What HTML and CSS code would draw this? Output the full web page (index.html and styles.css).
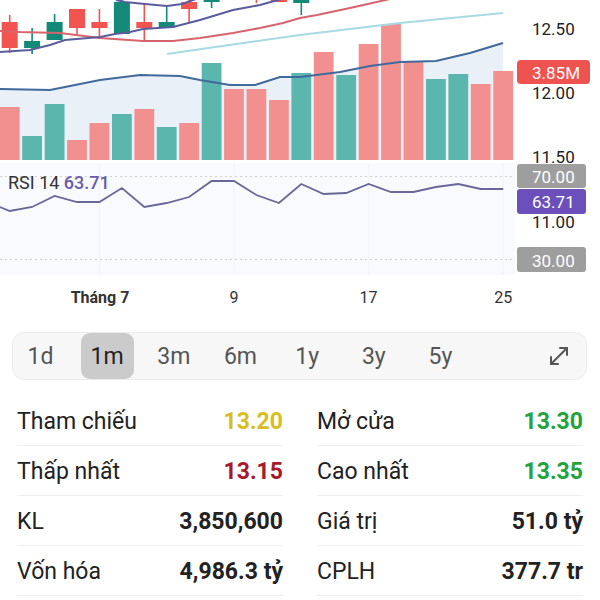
FILE: index.html
```html
<!DOCTYPE html>
<html lang="vi">
<head>
    <meta charset="UTF-8">
    <title>Biểu đồ</title>
    <link rel="stylesheet" href="styles.css">
</head>
<body>
    <!--biểu đồ nến + khối lượng + RSI-->
    <div class="chart-box">
        <svg class="chart" width="600" height="310" viewBox="0 0 600 310">
            <!--vùng RSI-->
            <rect x="0" y="163" width="515" height="112" fill="#f8fafd"/>
            <g stroke="#f1f3f7" stroke-width="1">
                <line x1="99.4" y1="163" x2="99.4" y2="275"/>
                <line x1="234" y1="163" x2="234" y2="275"/>
                <line x1="368.6" y1="163" x2="368.6" y2="275"/>
                <line x1="503.2" y1="163" x2="503.2" y2="275"/>
            </g>
            <g stroke="#cfcfcf" stroke-width="1" stroke-dasharray="2 3">
                <line x1="0" y1="176.5" x2="515" y2="176.5"/>
                <line x1="0" y1="259.5" x2="515" y2="259.5"/>
            </g>

            <!--đường MA khối lượng (vùng tô)-->
            <path d="M0,89 L50,90 60,88 100,80 140,75 180,76 200,80 230,85 255,85 280,77 300,77 340,72 370,66 400,62 436,61 470,53 503,43 L503,160 L0,160 Z" fill="#e9f0f8"/>

            <!--cột khối lượng-->
            <g class="vol-up" fill="#5bb7ae">
                <rect x="22.2" y="136" width="19.8" height="24"/>
                <rect x="44.7" y="104" width="19.8" height="56"/>
                <rect x="112" y="114" width="19.8" height="46"/>
                <rect x="156.8" y="127" width="19.8" height="33"/>
                <rect x="201.7" y="63" width="19.8" height="97"/>
                <rect x="291.4" y="73" width="19.8" height="87"/>
                <rect x="336.3" y="75" width="19.8" height="85"/>
                <rect x="426" y="79" width="19.8" height="81"/>
                <rect x="448.4" y="74" width="19.8" height="86"/>
            </g>
            <g class="vol-down" fill="#f29090">
                <rect x="-0.2" y="107" width="19.8" height="53"/>
                <rect x="67.1" y="140" width="19.8" height="20"/>
                <rect x="89.5" y="123" width="19.8" height="37"/>
                <rect x="134.4" y="109" width="19.8" height="51"/>
                <rect x="179.2" y="123" width="19.8" height="37"/>
                <rect x="224.1" y="89" width="19.8" height="71"/>
                <rect x="246.5" y="89" width="19.8" height="71"/>
                <rect x="269" y="100" width="19.8" height="60"/>
                <rect x="313.8" y="52" width="19.8" height="108"/>
                <rect x="358.7" y="44" width="19.8" height="116"/>
                <rect x="381.1" y="24" width="19.8" height="136"/>
                <rect x="403.5" y="61" width="19.8" height="99"/>
                <rect x="470.8" y="84" width="19.8" height="76"/>
                <rect x="493.3" y="71" width="19.8" height="89"/>
            </g>
            <polyline points="0,89 50,90 60,88 100,80 140,75 180,76 200,80 230,85 255,85 280,77 300,77 340,72 370,66 400,62 436,61 470,53 503,43" fill="none" stroke="#40699c" stroke-width="2"/>

            <!--nến-->
            <g stroke="#138a77" stroke-width="1.6">
                <line x1="32.1" y1="28" x2="32.1" y2="54"/>
                <line x1="54.6" y1="14" x2="54.6" y2="40"/>
                <line x1="121.9" y1="-5" x2="121.9" y2="34"/>
                <line x1="166.7" y1="7" x2="166.7" y2="28"/>
                <line x1="211.6" y1="-5" x2="211.6" y2="8"/>
                <line x1="301.3" y1="-5" x2="301.3" y2="15"/>
            </g>
            <g fill="#138a77">
                <rect x="24.1" y="41" width="16" height="7"/>
                <rect x="46.6" y="22" width="16" height="18"/>
                <rect x="113.9" y="2" width="16" height="32"/>
                <rect x="158.7" y="22" width="16" height="6"/>
                <rect x="203.6" y="-10" width="16" height="12"/>
                <rect x="293.3" y="-10" width="16" height="13"/>
            </g>
            <g stroke="#f2544f" stroke-width="1.6">
                <line x1="9.7" y1="15" x2="9.7" y2="53"/>
                <line x1="77" y1="9" x2="77" y2="34"/>
                <line x1="99.4" y1="9" x2="99.4" y2="39"/>
                <line x1="144.3" y1="3" x2="144.3" y2="41"/>
                <line x1="189.1" y1="-5" x2="189.1" y2="22"/>
                <line x1="256.4" y1="-5" x2="256.4" y2="3"/>
            </g>
            <g fill="#f2544f">
                <rect x="1.7" y="22" width="16" height="26"/>
                <rect x="69" y="9" width="16" height="19"/>
                <rect x="91.4" y="22" width="16" height="6"/>
                <rect x="136.3" y="22" width="16" height="6"/>
                <rect x="181.1" y="2" width="16" height="7"/>
                <rect x="270.9" y="-10" width="16" height="12"/>
            </g>

            <!--đường trung bình giá-->
            <g fill="none" stroke-width="2">
                <polyline points="0,31 20,32 60,33 100,38 143,41 173,41 200,38 233,33 260,28 283,23 300,18 317,15 350,8 390,-1" stroke="#d8636c"/>
                <polyline points="0,52 30,50 50,45 65,40 100,37 115,34 130,32 143,29 173,27 200,20 233,10 260,5 285,-2" stroke="#5a5c9c"/>
                <polyline points="116,0 125,2 145,4 167,6 182,4 196,-1" stroke="#5a5c9c"/>
                <polyline points="167,54 250,42 300,35 400,23 503,13" stroke="#a8dae3"/>
            </g>

            <!--đường RSI-->
            <polyline points="0,207 9.7,211 32.1,207 54.6,196 77,202 99.4,202 121.9,188 144.3,207 166.7,203 189.1,197 211.6,181 234,181 256.4,195 278.9,203 301.3,184 323.7,194 346.2,193 368.6,184 391,192 413.4,192 435.9,187 458.3,184 480.7,189 503.2,189" fill="none" stroke="#6a6699" stroke-width="1.8"/>
            <text class="rsi-label" x="8" y="189">RSI 14 <tspan class="rsi-value">63.71</tspan></text>

            <!--trục giá-->
            <g class="axis-label">
                <text x="532" y="35">12.50</text>
                <text x="532" y="99">12.00</text>
                <text x="532" y="163">11.50</text>
                <text x="532" y="228">11.00</text>
            </g>
            <rect x="517" y="60" width="73" height="24" rx="4" fill="#ef5350"/>
            <text class="badge-text" x="532" y="79">3.85M</text>
            <rect x="517" y="164" width="69" height="24" rx="3" fill="#9e9e9e"/>
            <text class="badge-text" x="532" y="183">70.00</text>
            <rect x="517" y="189" width="69" height="25" rx="3" fill="#6b4fbb"/>
            <text class="badge-text" x="532" y="208">63.71</text>
            <rect x="517" y="247" width="69" height="25" rx="3" fill="#9e9e9e"/>
            <text class="badge-text" x="532" y="267">30.00</text>

            <!--trục thời gian-->
            <g class="date-label">
                <text class="month" x="100" y="303">Tháng 7</text>
                <text x="234" y="303">9</text>
                <text x="368.6" y="303">17</text>
                <text x="503.2" y="303">25</text>
            </g>
        </svg>
    </div>

    <!--khung thời gian-->
    <div class="range-bar">
        <span class="range-item">1d</span>
        <span class="range-item active">1m</span>
        <span class="range-item">3m</span>
        <span class="range-item">6m</span>
        <span class="range-item">1y</span>
        <span class="range-item">3y</span>
        <span class="range-item">5y</span>
        <span class="expand-btn">
            <svg width="22" height="22" viewBox="0 0 22 22" fill="none" stroke="#555" stroke-width="2" stroke-linecap="round" stroke-linejoin="round">
                <path d="M3 19 L19 3"/>
                <path d="M12 3 H19 V10"/>
                <path d="M3 12 V19 H10"/>
            </svg>
        </span>
    </div>

    <!--thông tin giá-->
    <div class="stats">
        <div class="stat-row"><span class="stat-name">Tham chiếu</span><span class="stat-val ref">13.20</span></div>
        <div class="stat-row"><span class="stat-name">Mở cửa</span><span class="stat-val up">13.30</span></div>
        <div class="stat-row"><span class="stat-name">Thấp nhất</span><span class="stat-val down">13.15</span></div>
        <div class="stat-row"><span class="stat-name">Cao nhất</span><span class="stat-val up">13.35</span></div>
        <div class="stat-row"><span class="stat-name">KL</span><span class="stat-val">3,850,600</span></div>
        <div class="stat-row"><span class="stat-name">Giá trị</span><span class="stat-val">51.0 tỷ</span></div>
        <div class="stat-row"><span class="stat-name">Vốn hóa</span><span class="stat-val">4,986.3 tỷ</span></div>
        <div class="stat-row"><span class="stat-name">CPLH</span><span class="stat-val">377.7 tr</span></div>
    </div>
</body>
</html>
```
FILE: styles.css
```css
* {
    margin: 0;
    padding: 0;
    box-sizing: border-box;
}
body {
    width: 600px;
    background: #fff;
    color: #222;
    font-family: Roboto, "Noto Sans", sans-serif;
    overflow: hidden;
}

.chart-box {
    height: 310px;
}
.chart {
    display: block;
}
.rsi-label {
    font-size: 18px;
    fill: #333;
}
.rsi-value {
    fill: #6a5ca8;
    font-weight: 500;
}
.axis-label text {
    font-size: 17px;
    fill: #222;
}
.badge-text {
    font-size: 17px;
    fill: #fff;
}
.date-label text {
    font-size: 16px;
    fill: #333;
    text-anchor: middle;
}
.date-label .month {
    font-weight: 700;
}

.range-bar {
    display: flex;
    align-items: center;
    gap: 13.67px;
    margin: 22px 13px 0 12px;
    padding: 0 16px 0 1px;
    height: 48px;
    background: #f7f7f7;
    border: 1px solid #ececec;
    border-radius: 12px;
}
.range-item {
    width: 53px;
    height: 46px;
    line-height: 48px;
    text-align: center;
    font-size: 23px;
    color: #555;
    border-radius: 9px;
}
.range-item.active {
    background: #cbcbcb;
    color: #222;
}
.expand-btn {
    margin-left: auto;
    display: flex;
}

.stats {
    display: grid;
    grid-template-columns: 1fr 1fr;
    column-gap: 34px;
    margin-top: 16px;
    padding: 0 17px;
}
.stat-row {
    display: flex;
    justify-content: space-between;
    align-items: center;
    height: 50px;
    padding-top: 2px;
    border-bottom: 1px solid #eeeeee;
    font-size: 23px;
}
.stat-val {
    font-weight: 700;
}
.stat-val.ref {
    color: #d8bd1e;
}
.stat-val.down {
    color: #a8192b;
}
.stat-val.up {
    color: #22a33c;
}
```
